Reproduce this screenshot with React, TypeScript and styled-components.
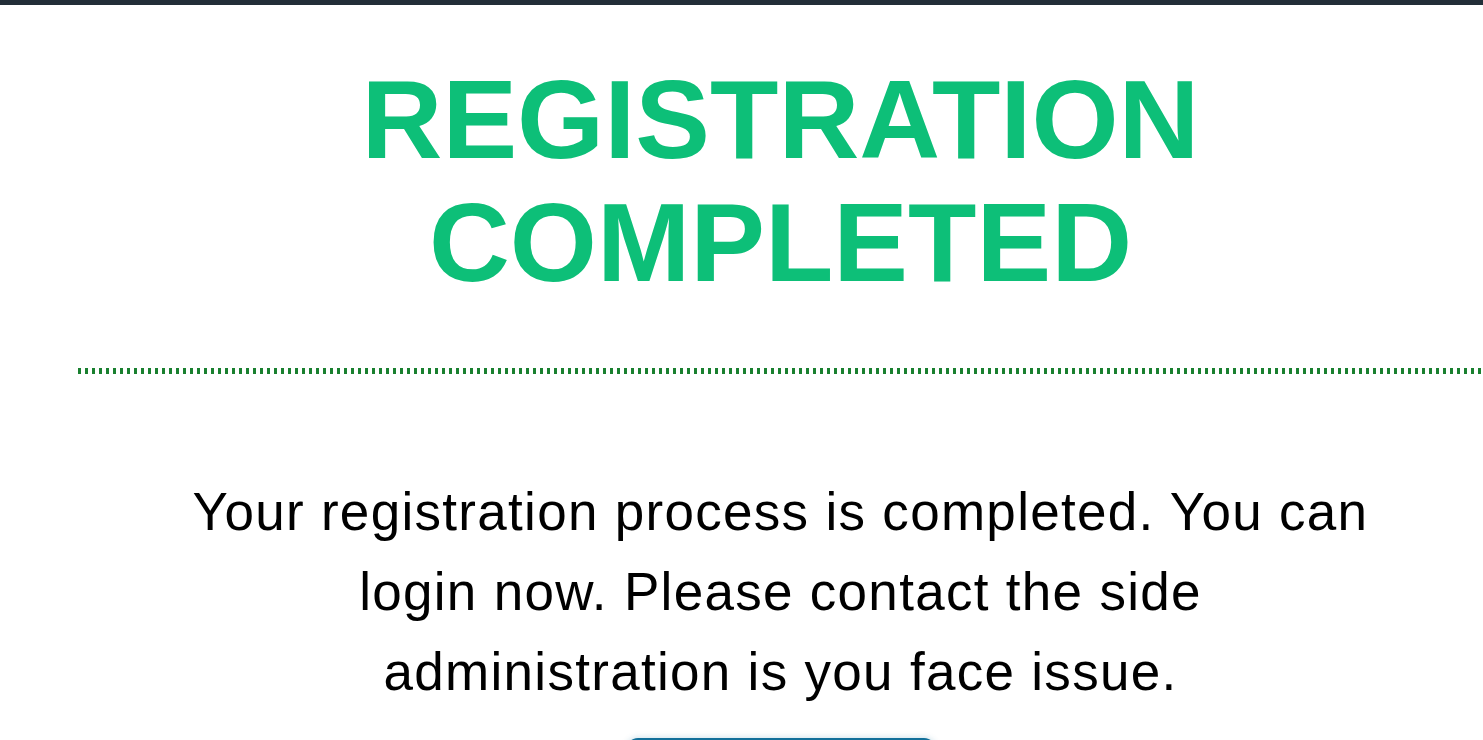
import React from "react";
import styled, { createGlobalStyle } from "styled-components";

const GlobalStyle = createGlobalStyle`
  html, body {
    margin: 0;
    padding: 0;
    background: #ffffff;
    overflow: hidden;
  }
  body {
    font-family: "Liberation Sans", Arial, sans-serif;
  }
`;

const TopBar = styled.div`
  height: 5px;
  background: #222e38;
`;

const Page = styled.main`
  margin-left: 78px;
  width: 1405px;
  display: flex;
  flex-direction: column;
  align-items: center;
`;

const Title = styled.h1`
  margin: 53px 0 0;
  font-family: "Liberation Sans", Arial, sans-serif;
  font-weight: 700;
  font-size: 112px;
  line-height: 1.1;
  color: #0dbf78;
  text-align: center;
  text-transform: uppercase;
`;

const Divider = styled.div`
  align-self: stretch;
  margin-top: 64px;
  height: 6px;
  background: repeating-linear-gradient(
    to right,
    #19802f 0,
    #19802f 3px,
    transparent 3px,
    transparent 7px
  );
`;

const Message = styled.p`
  margin: 98px 0 0;
  max-width: 1192px;
  font-family: "Liberation Sans", Arial, sans-serif;
  font-size: 53px;
  letter-spacing: 1.3px;
  line-height: 80px;
  color: #000000;
  text-align: center;
`;

const LoginButton = styled.button`
  margin-top: 26px;
  width: 310px;
  height: 60px;
  border: none;
  border-radius: 12px;
  background: #13709a;
  color: #ffffff;
  font-family: "Liberation Sans", Arial, sans-serif;
  font-size: 32px;
  box-shadow: 0 0 6px rgba(19, 112, 154, 0.25);
  cursor: pointer;
`;

export default function App() {
  return (
    <>
      <GlobalStyle />
      <TopBar />
      <Page>
        <Title>
          Registration
          <br />
          Completed
        </Title>
        <Divider />
        <Message>
          Your registration process is completed. You can login now. Please
          contact the side administration is you face issue.
        </Message>
        <LoginButton type="button">Login</LoginButton>
      </Page>
    </>
  );
}
